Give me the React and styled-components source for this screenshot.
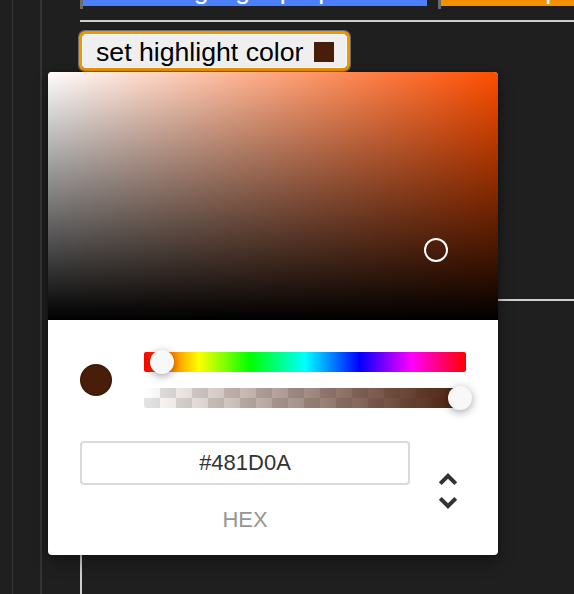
import React from "react";
import styled, { createGlobalStyle } from "styled-components";

const GlobalStyle = createGlobalStyle`
  html, body {
    margin: 0;
    height: 100%;
    background: #1f1f1f;
    font-family: "Liberation Sans", Arial, sans-serif;
  }
  #root {
    height: 100%;
  }
`;

const Page = styled.div`
  display: flex;
  height: 100vh;
  overflow: hidden;
`;

const Rail = styled.div`
  width: ${(p) => p.$w}px;
  flex-shrink: 0;
  border-right: ${(p) => p.$line}px solid #343434;
`;

const Main = styled.div`
  flex: 1;
  display: flex;
  flex-direction: column;
  padding-left: 38px;
  min-width: 0;
`;

const TabRow = styled.div`
  display: flex;
  gap: 11px;
  height: 9px;
`;

const Tab = styled.div`
  display: flex;
  width: ${(p) => (p.$w ? `${p.$w}px` : "auto")};
  flex: ${(p) => (p.$w ? "none" : 1)};
  border-left: 3px solid #6c6c6c;
`;

const TabFace = styled.div`
  flex: 1;
  height: 6px;
  display: flex;
  align-items: flex-end;
  justify-content: ${(p) => (p.$center ? "center" : "flex-start")};
  padding-left: ${(p) => p.$pad}px;
  overflow: hidden;
  background: ${(p) => p.$color};
  color: #fff;
  font-size: 26.67px;
  line-height: 1.15;
  white-space: nowrap;
`;

const Rule = styled.div`
  height: 2px;
  margin-top: 11px;
  background: #cfcfcf;
`;

const ButtonRow = styled.div`
  padding-top: 9px;
  display: flex;
`;

const Anchor = styled.div`
  position: relative;
  margin-left: -1px;
`;

const FocusRing = styled.div`
  border: 3px solid #f29500;
  border-radius: 6px;
  box-shadow: 0 0 0 1px rgba(255, 255, 255, 0.35);
`;

const SetButton = styled.button`
  display: flex;
  align-items: center;
  gap: 11px;
  margin: 0;
  padding: 2px 12px 0 13px;
  height: 34px;
  background: #efefef;
  border: 1px solid #fafafa;
  border-radius: 3px;
  font-family: "Liberation Sans", Arial, sans-serif;
  font-size: 26.67px;
  line-height: 30px;
  color: #000;
`;

const Swatch = styled.span`
  width: 20px;
  height: 20px;
  background: ${(p) => p.$color};
`;

const Popover = styled.div`
  position: absolute;
  top: 41px;
  left: -31px;
  width: 450px;
  z-index: 10;
  background: #fff;
  border-radius: 4px;
  box-shadow: 0 0 4px rgba(0, 0, 0, 0.3), 0 8px 16px rgba(0, 0, 0, 0.3);
`;

const Saturation = styled.div`
  position: relative;
  height: 248px;
  border-radius: 4px 4px 0 0;
  background: linear-gradient(to top, #000, rgba(0, 0, 0, 0)),
    linear-gradient(to right, #fff, rgba(255, 255, 255, 0)),
    ${(p) => p.$hue};
`;

const SatPointer = styled.div`
  position: absolute;
  width: 24px;
  height: 24px;
  border-radius: 50%;
  box-shadow: inset 0 0 0 2px #fff;
  transform: translate(-12px, -12px);
`;

const Body = styled.div`
  padding: 32px 32px 24px;
`;

const Controls = styled.div`
  display: flex;
`;

const ColorCol = styled.div`
  width: 64px;
`;

const ColorDot = styled.div`
  margin-top: 12px;
  width: 32px;
  height: 32px;
  border-radius: 50%;
  background: ${(p) => p.$color};
  box-shadow: inset 0 0 0 2px rgba(0, 0, 0, 0.1);
`;

const Sliders = styled.div`
  flex: 1;
`;

const HueTrack = styled.div`
  position: relative;
  height: 20px;
  margin-bottom: 16px;
  border-radius: 2px;
  background: linear-gradient(
    to right,
    #f00 0%,
    #ff0 17%,
    #0f0 33%,
    #0ff 50%,
    #00f 67%,
    #f0f 83%,
    #f00 100%
  );
`;

const AlphaTrack = styled.div`
  position: relative;
  height: 20px;
  border-radius: 2px;
  background-image: linear-gradient(to right, ${(p) => p.$from}, ${(p) => p.$to}),
    repeating-conic-gradient(#e4e4e4 0 25%, #fff 0 50%);
  background-size: 100% 100%, 32px 20px;
`;

const Thumb = styled.div`
  position: absolute;
  top: -2px;
  width: 24px;
  height: 24px;
  border-radius: 50%;
  background: #f8f8f8;
  box-shadow: 0 2px 8px 0 rgba(0, 0, 0, 0.37);
  transform: translateX(-12px);
`;

const Fields = styled.div`
  display: flex;
  padding-top: 33px;
`;

const FieldCol = styled.div`
  width: 330px;
  display: flex;
  flex-direction: column;
`;

const HexInput = styled.input`
  box-sizing: border-box;
  width: 100%;
  height: 44px;
  margin: 0;
  padding: 0;
  border: none;
  border-radius: 4px;
  box-shadow: inset 0 0 0 2px #dadada;
  outline: none;
  text-align: center;
  font-family: "Liberation Sans", Arial, sans-serif;
  font-size: 22px;
  color: #333;
  background: #fff;
`;

const FieldLabel = styled.div`
  margin-top: 24px;
  text-align: center;
  text-transform: uppercase;
  font-size: 22px;
  line-height: 22px;
  color: #969696;
`;

const Toggle = styled.div`
  flex: 1;
  display: flex;
  justify-content: flex-end;
  margin-right: -6px;

  svg {
    margin-top: 26px;
    width: 48px;
    height: 48px;
  }
`;

const Spacer = styled.div`
  height: 228px;
  flex-shrink: 0;
`;

const Panel = styled.div`
  flex: 1;
  border-top: 2px solid #cfcfcf;
  border-left: 2px solid #cfcfcf;
`;

const hexToHsv = (hex) => {
  const n = parseInt(hex.slice(1), 16);
  const r = (n >> 16) & 255;
  const g = (n >> 8) & 255;
  const b = n & 255;
  const max = Math.max(r, g, b);
  const min = Math.min(r, g, b);
  const d = max - min;
  let h = 0;
  if (d) {
    if (max === r) h = ((g - b) / d) % 6;
    else if (max === g) h = (b - r) / d + 2;
    else h = (r - g) / d + 4;
    h *= 60;
    if (h < 0) h += 360;
  }
  return { h, s: max ? d / max : 0, v: max / 255, r, g, b };
};

const HEX = "#481D0A";
const SAT_W = 450;
const SAT_H = 248;
const TRACK_W = 322;

const App = () => {
  const c = hexToHsv(HEX);
  const alpha = 1;

  return (
    <>
      <GlobalStyle />
      <Page>
        <Rail $w={12} $line={1} />
        <Rail $w={27} $line={2} />
        <Main>
          <TabRow>
            <Tab $w={344}>
              <TabFace $color="#4b7ffb" $center $pad={11}>
                edit highlight properties
              </TabFace>
            </Tab>
            <Tab>
              <TabFace $color="#f39200" $pad={76}>
                export
              </TabFace>
            </Tab>
          </TabRow>
          <Rule />
          <ButtonRow>
            <Anchor>
              <FocusRing>
                <SetButton>
                  set highlight color
                  <Swatch $color={HEX} />
                </SetButton>
              </FocusRing>

              <Popover>
                <Saturation $hue={`hsl(${c.h}, 100%, 50%)`}>
                  <SatPointer
                    style={{ left: c.s * SAT_W, top: (1 - c.v) * SAT_H }}
                  />
                </Saturation>
                <Body>
                  <Controls>
                    <ColorCol>
                      <ColorDot $color={HEX} />
                    </ColorCol>
                    <Sliders>
                      <HueTrack>
                        <Thumb style={{ left: 2 + (c.h / 360) * TRACK_W }} />
                      </HueTrack>
                      <AlphaTrack
                        $from={`rgba(${c.r}, ${c.g}, ${c.b}, 0)`}
                        $to={`rgb(${c.r}, ${c.g}, ${c.b})`}
                      >
                        <Thumb style={{ left: 6 + alpha * (TRACK_W - 12) }} />
                      </AlphaTrack>
                    </Sliders>
                  </Controls>
                  <Fields>
                    <FieldCol>
                      <HexInput value={HEX} readOnly />
                      <FieldLabel>hex</FieldLabel>
                    </FieldCol>
                    <Toggle>
                      <svg viewBox="0 0 24 24">
                        <path
                          fill="#333"
                          d="M12,18.17L8.83,15L7.41,16.41L12,21L16.59,16.41L15.17,15M12,5.83L15.17,9L16.59,7.59L12,3L7.41,7.59L8.83,9L12,5.83Z"
                        />
                      </svg>
                    </Toggle>
                  </Fields>
                </Body>
              </Popover>
            </Anchor>
          </ButtonRow>
          <Spacer />
          <Panel />
        </Main>
      </Page>
    </>
  );
};

export default App;
